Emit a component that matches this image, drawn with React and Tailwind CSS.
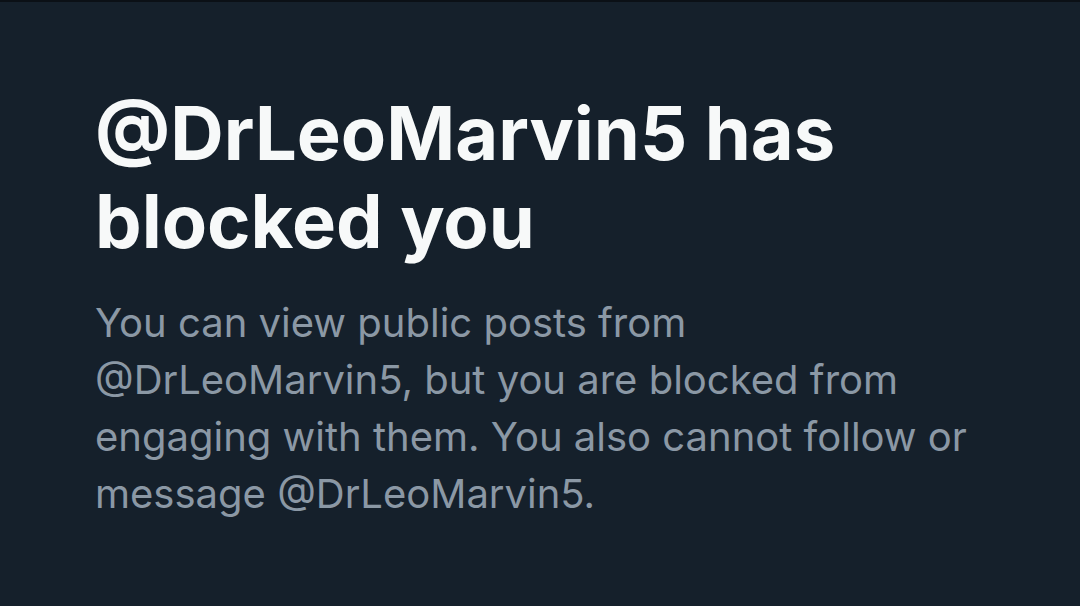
export default function App() {
  return (
    <div className="h-[606px] w-[1080px] overflow-hidden border-t-2 border-[#0b1016] bg-[#15202b] font-['Inter','Liberation_Sans',sans-serif]">
      <div className="w-[990px] pl-[95px] pt-[87px]">
        <h1 className="text-[74px] font-bold leading-[88px] text-[#f7f9f9]">
          @DrLeoMarvin5 has blocked you
        </h1>
        <p className="mt-[29px] text-[40px] leading-[57px] text-[#8b98a5]">
          You can view public posts from @DrLeoMarvin5, but you are blocked from engaging with them. You also cannot follow or message @DrLeoMarvin5.
        </p>
      </div>
    </div>
  )
}
